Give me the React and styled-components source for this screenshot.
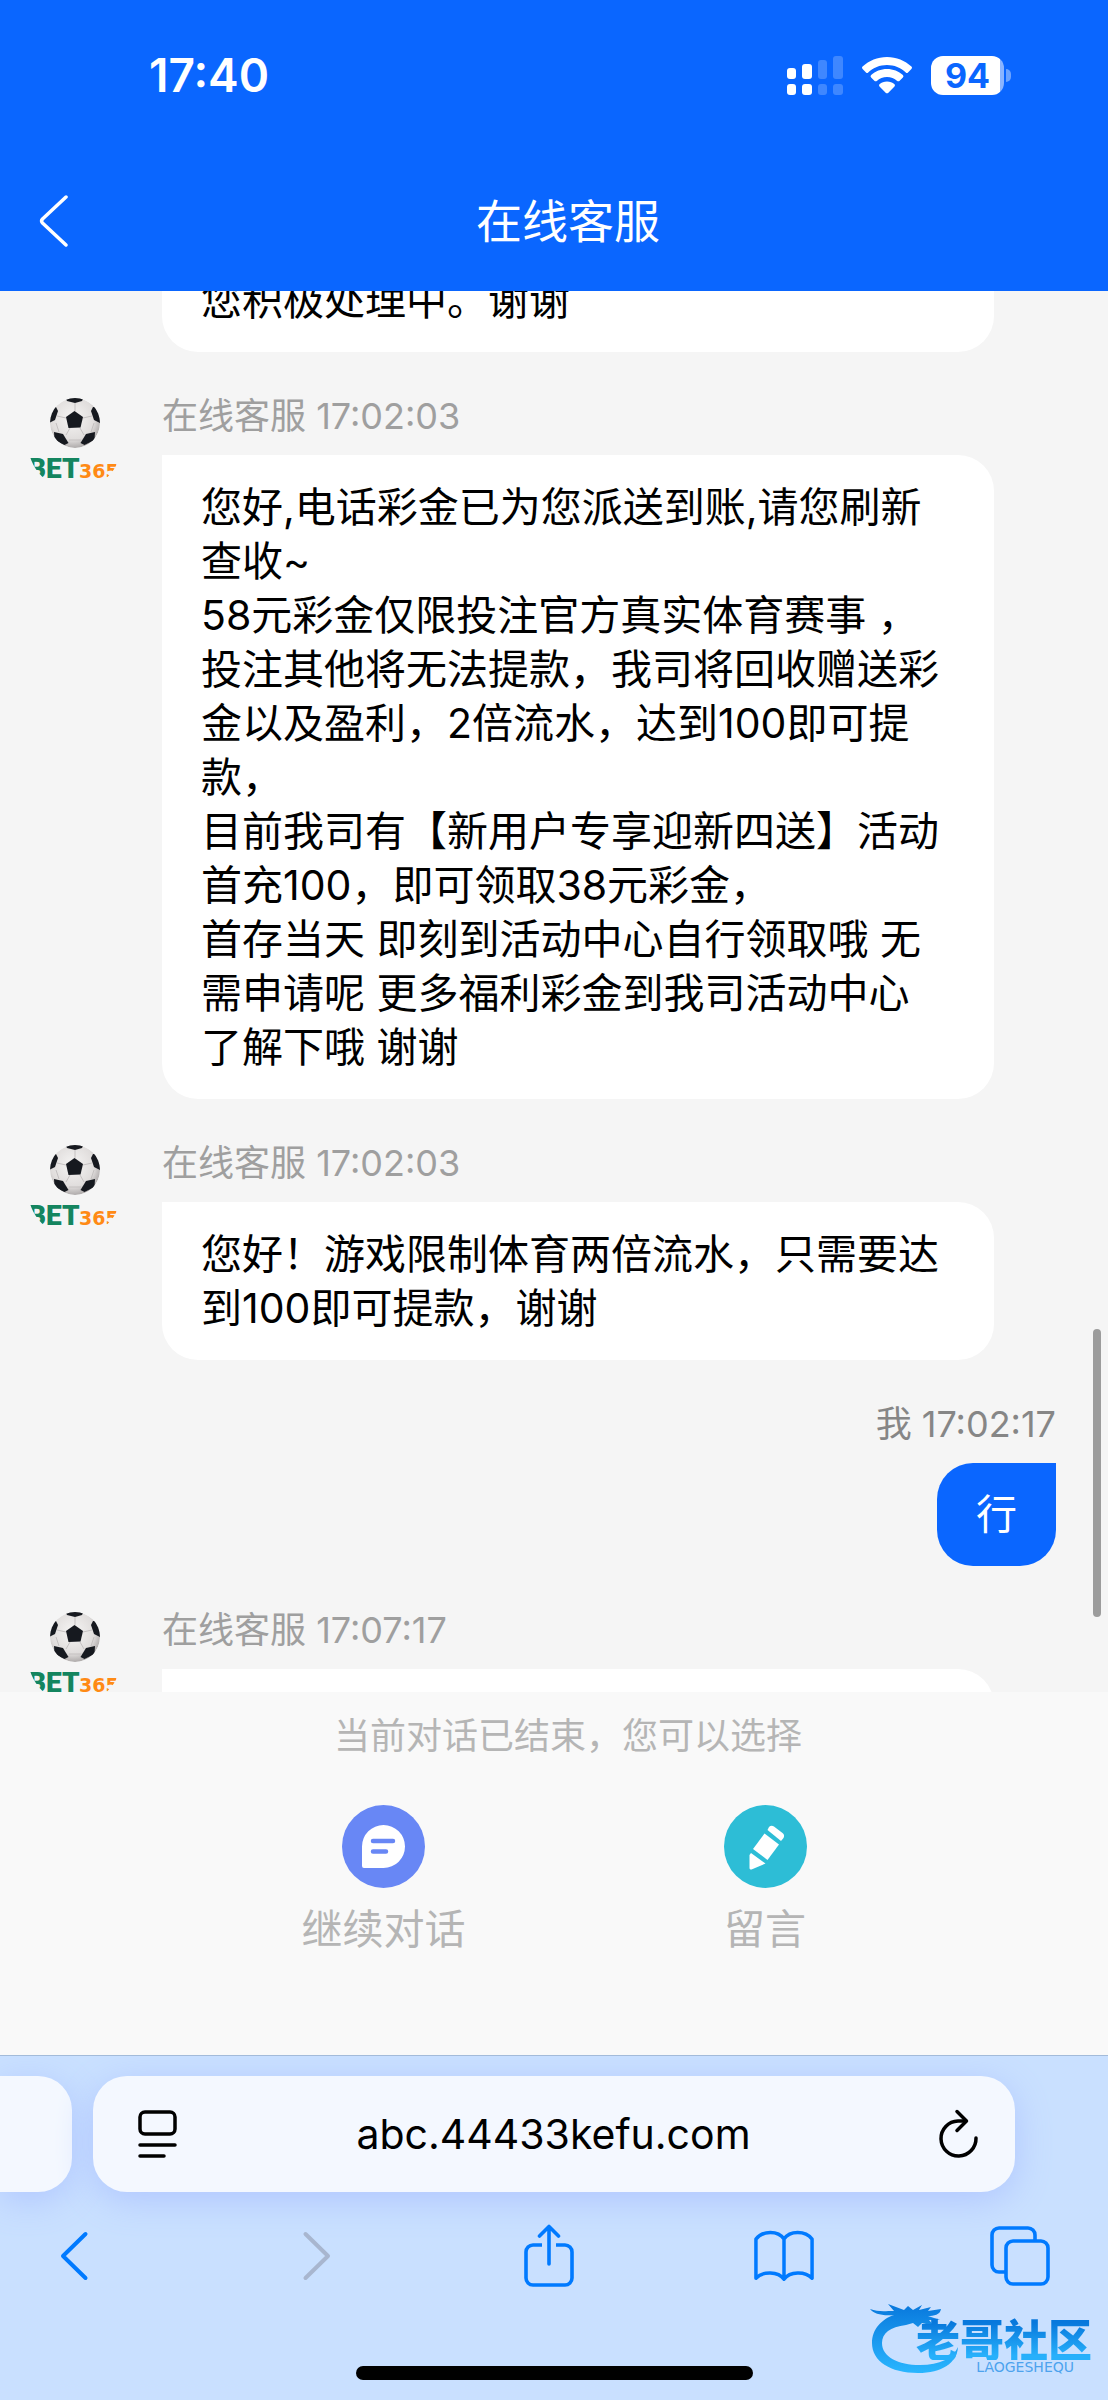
import React, { useLayoutEffect, useRef } from "react";
import styled, { createGlobalStyle } from "styled-components";

const GlobalStyle = createGlobalStyle`
  *, *::before, *::after { box-sizing: border-box; }
  body {
    margin: 0;
    background: #f5f5f5;
    font-family: Inter, "Noto Sans CJK SC", sans-serif;
    color: #000;
  }
  button { border: 0; padding: 0; background: none; font: inherit; color: inherit; cursor: pointer; }
  svg { display: block; }
`;

const Shell = styled.div`
  display: flex;
  flex-direction: column;
  height: 100vh;
`;

const Header = styled.header`
  flex: none;
  background: #0a66ff;
  color: #fff;
`;

const StatusBar = styled.div`
  display: flex;
  align-items: center;
  justify-content: space-between;
  height: 150px;
  padding: 0 97px 0 149px;
`;

const Clock = styled.time`
  font-size: 46px;
  line-height: 56px;
  font-weight: 600;
`;

const StatusIcons = styled.div`
  display: flex;
  align-items: center;
  gap: 19px;
`;

const BatteryBox = styled.div`
  display: flex;
  align-items: center;
  gap: 2px;
`;

const BatteryBody = styled.div`
  width: 73px;
  height: 39px;
  border-radius: 12px;
  background: linear-gradient(to right, #fff 94%, #8ab4ff 94%);
  color: #0a66ff;
  font-size: 34px;
  line-height: 39px;
  font-weight: 700;
  text-align: center;
`;

const BatteryCap = styled.div`
  width: 5px;
  height: 13px;
  border-radius: 0 6px 6px 0;
  background: #6ca3ff;
`;

const TitleBar = styled.div`
  display: grid;
  grid-template-columns: 116px 1fr 88px;
  align-items: center;
  height: 141px;
`;

const BackButton = styled.button`
  justify-self: start;
  margin-left: 39px;
`;

const Title = styled.h1`
  margin: 0;
  font-size: 46px;
  line-height: 56px;
  font-weight: 400;
  text-align: center;
`;

const Chat = styled.main`
  position: relative;
  flex: 1;
  min-height: 0;
  display: flex;
  background: #f5f5f5;
`;

const Thread = styled.div`
  flex: 1;
  display: flex;
  flex-direction: column;
  gap: 40px;
  overflow-y: auto;
  scrollbar-width: none;
  padding: 0 52px 0 29px;
`;

const ScrollThumb = styled.div`
  position: absolute;
  right: 7px;
  top: 1038px;
  width: 8px;
  height: 288px;
  border-radius: 4px;
  background: #9c9c9c;
`;

const Row = styled.article`
  flex: none;
  display: flex;
  gap: 41px;
  justify-content: ${(p) => (p.$mine ? "flex-end" : "flex-start")};
  padding-right: ${(p) => (p.$mine ? 0 : 62)}px;
`;

const AvatarSlot = styled.div`
  flex: none;
  width: 92px;
  padding-top: 5px;
`;

const Column = styled.div`
  flex: ${(p) => (p.$mine ? "none" : "1")};
  min-width: 0;
  display: flex;
  flex-direction: column;
  align-items: ${(p) => (p.$mine ? "flex-end" : "stretch")};
  gap: 14px;
`;

const Meta = styled.div`
  font-size: 36px;
  line-height: 49px;
  color: ${(p) => (p.$mine ? "#868686" : "#9f9f9f")};
`;

const Bubble = styled.p`
  margin: 0;
  min-height: 103px;
  padding: ${(p) => (p.$mine ? "24px 39px 25px" : "25px 49px 25px 39px")};
  border-radius: ${(p) => (p.$mine ? "36px 0 36px 36px" : "0 36px 36px 36px")};
  background: ${(p) => (p.$mine ? "#0a66ff" : "#fff")};
  color: ${(p) => (p.$mine ? "#fff" : "#000")};
  font-size: 41px;
  line-height: 54px;
  white-space: pre-wrap;
`;

const EndPanel = styled.section`
  flex: none;
  display: flex;
  flex-direction: column;
  align-items: center;
  height: 363px;
  padding-top: 20px;
  background: #f9f9f9;
  color: #b5b5b5;
`;

const EndNote = styled.p`
  margin: 0;
  padding-left: 28px;
  font-size: 36px;
  line-height: 49px;
`;

const Choices = styled.div`
  display: flex;
  gap: 258px;
  margin-top: 44px;
`;

const Choice = styled.button`
  display: flex;
  flex-direction: column;
  align-items: center;
  gap: 14px;
  font-size: 41px;
  line-height: 54px;
`;

const Browser = styled.footer`
  position: relative;
  flex: none;
  display: flex;
  flex-direction: column;
  align-items: center;
  height: 345px;
  overflow: hidden;
  border-top: 1px solid #a3bbda;
  background: #c9e0ff;
`;

const TabStrip = styled.div`
  align-self: stretch;
  display: flex;
  gap: 21px;
  padding-top: 20px;
`;

const Pill = styled.div`
  height: 116px;
  background: #f4f8ff;
  box-shadow: 0 8px 36px #b0c6ff;
`;

const PreviousTab = styled(Pill)`
  width: 72px;
  border-radius: 0 34px 34px 0;
`;

const AddressBar = styled(Pill)`
  flex: 1;
  display: grid;
  grid-template-columns: 1fr auto 1fr;
  align-items: center;
  margin-right: 93px;
  padding: 0 36px 0 43px;
  border-radius: 34px;
`;

const BarButton = styled.button`
  justify-self: ${(p) => (p.$end ? "end" : "start")};
`;

const Address = styled.span`
  padding-right: 8px;
  font-size: 41px;
  line-height: 54px;
`;

const Toolbar = styled.nav`
  align-self: stretch;
  display: flex;
  align-items: center;
  justify-content: space-between;
  height: 128px;
  padding: 0 58px 0 44px;
  color: #007aff;
`;

const ToolButton = styled.button`
  display: flex;
  justify-content: center;
  width: 60px;
`;

const HomeIndicator = styled.div`
  width: 397px;
  height: 14px;
  margin-top: 46px;
  border-radius: 7px;
  background: #000;
`;

const Watermark = styled.div`
  position: absolute;
  right: 16px;
  bottom: 26px;
  width: 222px;
  height: 73px;
  display: flex;
  flex-direction: column;
  align-items: flex-end;
  justify-content: flex-end;
`;

const WatermarkArt = styled.svg`
  position: absolute;
  left: 0;
  top: 0;
`;

const WatermarkName = styled.span`
  position: relative;
  font-family: "Noto Sans CJK SC", sans-serif;
  font-size: 44px;
  line-height: 44px;
  font-weight: 900;
  color: transparent;
  background: linear-gradient(#0878dc 15%, #27b0fb 90%);
  background-clip: text;
`;

const WatermarkLatin = styled.span`
  position: relative;
  padding-right: 18px;
  font-family: "DejaVu Sans", sans-serif;
  font-size: 14px;
  line-height: 14px;
  color: #4da3ee;
`;

const Signal = () => (
  <svg width="57" height="39" viewBox="0 0 57 39" fill="#fff">
    <rect x="1" y="12" width="9" height="11" rx="3" />
    <rect x="16" y="8" width="10" height="15" rx="3" />
    <rect x="32" y="4" width="9" height="19" rx="3" opacity=".22" />
    <rect x="47" y="0" width="10" height="23" rx="3" opacity=".22" />
    <rect x="1" y="28" width="9" height="11" rx="3" />
    <rect x="16" y="28" width="10" height="11" rx="3" />
    <rect x="32" y="28" width="9" height="11" rx="3" opacity=".22" />
    <rect x="47" y="28" width="10" height="11" rx="3" opacity=".22" />
  </svg>
);

const Wifi = () => (
  <svg width="50" height="37" viewBox="0 0 50 37" fill="#fff">
    <path d="M25 0C15.500 0 7 3.600.6 9.600a1.600 1.600 0 0 0 0 2.300L4 15.400a1.500 1.500 0 0 0 2.200 0C11.200 10.700 17.800 8 25 8s13.800 2.700 18.800 7.400a1.500 1.500 0 0 0 2.200 0l3.400-3.500a1.600 1.600 0 0 0 0-2.300C43 3.600 34.500 0 25 0z" />
    <path d="M25 12c-6.100 0-11.700 2.300-15.900 6.100a1.600 1.600 0 0 0 0 2.300l3.500 3.500c.6.600 1.500.6 2.200.1C17.500 21.500 21.100 20 25 20s7.500 1.500 10.200 4c.7.500 1.600.5 2.200-.1l3.500-3.500a1.600 1.600 0 0 0 0-2.300C36.700 14.300 31.100 12 25 12z" />
    <path d="M25 24.500c-2.900 0-5.500 1-7.500 2.800-.6.600-.6 1.500 0 2.100l6.400 6.500c.6.600 1.600.6 2.200 0l6.400-6.500c.6-.6.600-1.500 0-2.100-2-1.800-4.600-2.800-7.500-2.800z" />
  </svg>
);

const Avatar = () => (
  <svg width="92" height="92" viewBox="0 0 92 92" role="img" aria-label="BET365">
    <defs>
      <clipPath id="avatar-round"><circle cx="46" cy="46" r="47" /></clipPath>
      <clipPath id="avatar-ball"><circle cx="46" cy="26" r="25" /></clipPath>
      <radialGradient id="avatar-shade" cx=".45" cy=".4" r=".62">
        <stop offset="0" stopColor="#f6f5f4" />
        <stop offset=".7" stopColor="#e0dddc" />
        <stop offset="1" stopColor="#a9a5a5" />
      </radialGradient>
    </defs>
    <g clipPath="url(#avatar-ball)">
      <circle cx="46" cy="26" r="25" fill="url(#avatar-shade)" />
      <path
        d="M46 14V6M54 21l9-2M51 31l4 7M41 31l-4 7M37 21l-9-2M27 26l3 9M65 26l-3 9M40 43h12"
        stroke="#c4c0c0"
        strokeWidth="1"
        fill="none"
      />
      <g fill="#16191f">
        <path d="M45.500 14l8.500 6-2.500 10.500-12 .5L37 20z" />
        <path d="M36 0h19l-2 4-7 2-8-2z" />
        <path d="M72 10h-8l-2 4 3 9 6 3z" />
        <path d="M20 10h7l2 4-3 9-6 3z" />
        <path d="M25 35l9 2 5.500 9-4 2-10-5z" />
        <path d="M66 35l-9 2-5.500 9 4 2 10-5z" />
      </g>
    </g>
    <g clipPath="url(#avatar-round)">
      <text x="-1" y="81" fontFamily="Roboto, sans-serif" fontSize="28" fontWeight="900" fill="#14855f">BET</text>
      <text x="50" y="81" fontFamily="DejaVu Sans, sans-serif" fontSize="19" fontWeight="700" fill="#ff8a15">365</text>
    </g>
  </svg>
);

const ChatIcon = () => (
  <svg width="83" height="83" viewBox="0 0 83 83">
    <circle cx="41.500" cy="41.500" r="41.500" fill="#6887f5" />
    <path d="M41.500 20a21.500 21.500 0 0 1 0 43H22a2 2 0 0 1-2-2V41.500A21.500 21.500 0 0 1 41.500 20z" fill="#fff" />
    <path d="M31 36h20M31 46.500h13" stroke="#6887f5" strokeWidth="4.500" strokeLinecap="round" />
  </svg>
);

const PencilIcon = () => (
  <svg width="83" height="83" viewBox="0 0 83 83">
    <circle cx="41.500" cy="41.500" r="41.500" fill="#2dbdd6" />
    <g fill="#fff">
      <path d="M45 22a4 4 0 0 1 5-.4l8.500 6.500a4 4 0 0 1 1 5L57 36 43.500 25z" />
      <path d="M40.500 28.500L55 39.500 43.500 55 29 44z" />
      <path d="M27 48l14.500 10.500L27.500 64.500a1.500 1.500 0 0 1-2-1.500V50z" />
    </g>
  </svg>
);

const ReaderIcon = () => (
  <svg width="42" height="50" viewBox="0 0 42 50" fill="none" stroke="#000" strokeWidth="3.500" strokeLinecap="round">
    <rect x="4" y="3" width="35" height="22" rx="5" />
    <path d="M4 36h35M4 47h24" />
  </svg>
);

const ReloadIcon = () => (
  <svg width="42" height="50" viewBox="0 0 42 50" fill="none" stroke="#000" strokeWidth="3.500" strokeLinecap="round" strokeLinejoin="round">
    <path d="M28 12H21A17.500 17.500 0 1 0 39 29" />
    <path d="M20 2.500l9.500 9.500L20 21.500" />
  </svg>
);

const stroke = { fill: "none", stroke: "currentColor", strokeLinecap: "round", strokeLinejoin: "round" };

const BackIcon = () => (
  <svg width="30" height="50" viewBox="0 0 30 50" {...stroke} strokeWidth="4">
    <path d="M26.500 3L4 25l22.500 22" />
  </svg>
);
const ForwardIcon = () => (
  <svg width="42" height="50" viewBox="-12 0 42 50" {...stroke} stroke="#a8b6cf" strokeWidth="4">
    <path d="M3.500 3L26 25 3.500 47" />
  </svg>
);
const ShareIcon = () => (
  <svg width="54" height="64" viewBox="-4 0 54 64" {...stroke} strokeWidth="3.600">
    <path d="M18 21H9a7 7 0 0 0-7 7v26a7 7 0 0 0 7 7h32a7 7 0 0 0 7-7V28a7 7 0 0 0-7-7h-9" strokeLinecap="butt" />
    <path d="M25 40V3M15.500 12L25 2.500 34.500 12" />
  </svg>
);
const BookIcon = () => (
  <svg width="62" height="54" viewBox="0 0 62 54" {...stroke} strokeWidth="3.600">
    <path d="M31 9.500C25 .5 9 .5 2 9.500V50c7-7.500 23-7.500 29 1 6-8.500 22-8.500 29-1V9.500C53 .5 37 .5 31 9.500zM31 9.500V51" />
  </svg>
);
const TabsIcon = () => (
  <svg width="60" height="60" viewBox="0 0 60 60" {...stroke} strokeWidth="3.600">
    <rect x="16" y="15" width="42" height="43" rx="7" />
    <path d="M16 46H9a7 7 0 0 1-7-7V9a7 7 0 0 1 7-7h29a7 7 0 0 1 7 7v6" strokeLinecap="butt" />
  </svg>
);

const messages = [
  { text: "您积极处理中。谢谢" },
  {
    time: "17:02:03",
    text:
      "您好,电话彩金已为您派送到账,请您刷新查收~\n58元彩金仅限投注官方真实体育赛事 ，投注其他将无法提款，我司将回收赠送彩金以及盈利，2倍流水，达到100即可提款，\n目前我司有【新用户专享迎新四送】活动\n首充100，即可领取38元彩金，\n首存当天 即刻到活动中心自行领取哦 无需申请呢 更多福利彩金到我司活动中心了解下哦 谢谢",
  },
  { time: "17:02:03", text: "您好！游戏限制体育两倍流水，只需要达到100即可提款，谢谢" },
  { time: "17:02:17", text: "行", mine: true },
  { time: "17:07:17", text: "" },
];

function Message({ time, text, mine }) {
  return (
    <Row $mine={mine}>
      {!mine && <AvatarSlot>{time && <Avatar />}</AvatarSlot>}
      <Column $mine={mine}>
        {time && <Meta $mine={mine}>{mine ? "我" : "在线客服"} {time}</Meta>}
        <Bubble $mine={mine}>{text}</Bubble>
      </Column>
    </Row>
  );
}

export default function App() {
  const thread = useRef(null);
  useLayoutEffect(() => {
    thread.current.scrollTop = 43;
  }, []);

  return (
    <Shell>
      <GlobalStyle />
      <Header>
        <StatusBar>
          <Clock>17:40</Clock>
          <StatusIcons>
            <Signal />
            <Wifi />
            <BatteryBox>
              <BatteryBody>94</BatteryBody>
              <BatteryCap />
            </BatteryBox>
          </StatusIcons>
        </StatusBar>
        <TitleBar>
          <BackButton aria-label="返回">
            <svg width="30" height="52" viewBox="0 0 30 52" {...stroke} strokeWidth="3.500">
              <path d="M27 2L3.500 24a3 3 0 0 0 0 4L27 50" />
            </svg>
          </BackButton>
          <Title>在线客服</Title>
        </TitleBar>
      </Header>

      <Chat>
        <Thread ref={thread}>
          {messages.map((m, i) => <Message key={i} {...m} />)}
        </Thread>
        <ScrollThumb />
      </Chat>

      <EndPanel>
        <EndNote>当前对话已结束，您可以选择</EndNote>
        <Choices>
          <Choice><ChatIcon />继续对话</Choice>
          <Choice><PencilIcon />留言</Choice>
        </Choices>
      </EndPanel>

      <Browser>
        <TabStrip>
          <PreviousTab />
          <AddressBar>
            <BarButton aria-label="页面菜单"><ReaderIcon /></BarButton>
            <Address>abc.44433kefu.com</Address>
            <BarButton $end aria-label="重新载入"><ReloadIcon /></BarButton>
          </AddressBar>
        </TabStrip>
        <Toolbar>
          <ToolButton aria-label="后退"><BackIcon /></ToolButton>
          <ToolButton aria-label="前进" disabled><ForwardIcon /></ToolButton>
          <ToolButton aria-label="分享"><ShareIcon /></ToolButton>
          <ToolButton aria-label="书签"><BookIcon /></ToolButton>
          <ToolButton aria-label="标签页"><TabsIcon /></ToolButton>
        </Toolbar>
        <HomeIndicator />
        <Watermark>
          <WatermarkArt width="100" height="74" viewBox="0 0 100 74">
            <defs>
              <linearGradient id="dragon" x1="0" y1="0" x2="0" y2="1">
                <stop offset="0" stopColor="#0878dc" />
                <stop offset="1" stopColor="#2ab6ff" />
              </linearGradient>
            </defs>
            <path
              fill="url(#dragon)"
              d="M0 8c8 3 14 2 24 2l-6-7 16 6 4-4 5 4 9-5-3 5 12-3-3 4 13-2c-1 6-7 7-13 7l12 4h-11l5 6-12-3-4 4-5-4-7 2C20 26 12 32 12 42c0 14 16 22 38 22 20 0 33-7 38-18-1 16-16 26-40 26C20 72 2 60 2 42 2 28 12 18 24 14 12 15 4 13 0 8z"
            />
          </WatermarkArt>
          <WatermarkName>老哥社区</WatermarkName>
          <WatermarkLatin>LAOGESHEQU</WatermarkLatin>
        </Watermark>
      </Browser>
    </Shell>
  );
}
